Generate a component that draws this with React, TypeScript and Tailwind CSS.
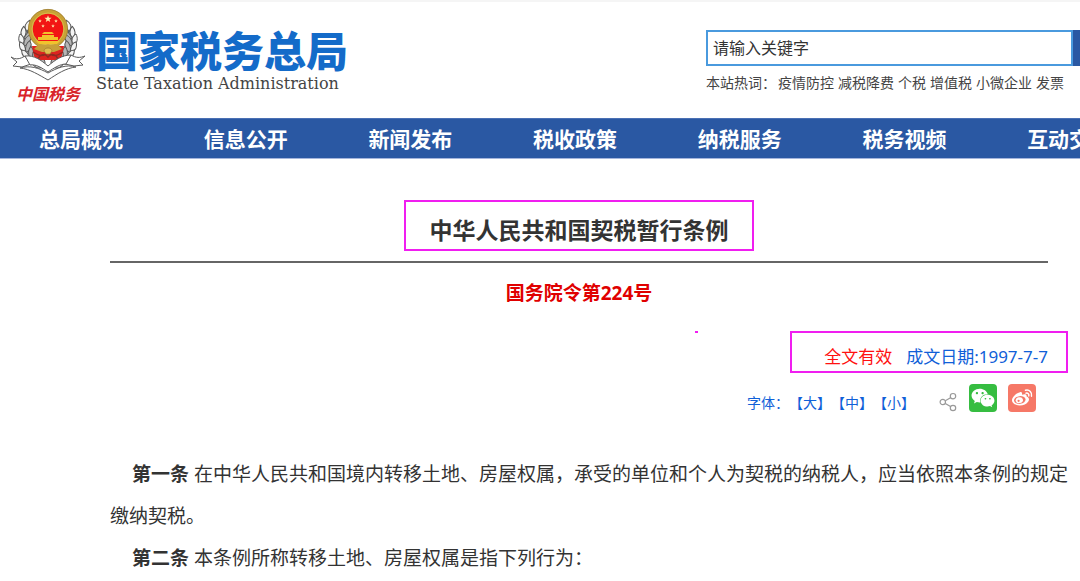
import { FaWeixin } from "react-icons/fa";

const navItems = ["总局概况", "信息公开", "新闻发布", "税收政策", "纳税服务", "税务视频", "互动交流"];

const hotWords = ["疫情防控", "减税降费", "个税", "增值税", "小微企业", "发票"];

const fontSizes = ["大", "中", "小"];

const articles = [
  {
    title: "第一条",
    text: "在中华人民共和国境内转移土地、房屋权属，承受的单位和个人为契税的纳税人，应当依照本条例的规定缴纳契税。",
  },
  { title: "第二条", text: "本条例所称转移土地、房屋权属是指下列行为：" },
];

// x, y and tilt of each leaf on the left half of the wreath
const leaves = [
  [19, 19, 30],
  [15, 25, 15],
  [13, 32, 0],
  [14, 39, -12],
  [17, 46, -28],
  [22, 52, -45],
  [29, 56, -62],
];

function Star({ x, y, r }: { x: number; y: number; r: number }) {
  return (
    <path
      transform={`translate(${x} ${y}) scale(${r})`}
      fill="#fff0b0"
      d="M0-1 .24-.31.95-.31.38.12.59.81 0 .4-.59.81-.38.12-.95-.31-.24-.31Z"
    />
  );
}

function LaurelSide() {
  return (
    <g fill="#f4f4f4" stroke="#555" strokeWidth="1">
      {leaves.map(([x, y, angle]) => (
        <g key={y} transform={`translate(${x} ${y}) rotate(${angle})`}>
          <path d="M0 5C-5 3-5-2-3-6 1-4 2 1 0 5Z" />
          <path d="M1 6C0 0 4-4 7-5 9 0 6 5 1 6Z" fill="#b5b5b5" />
        </g>
      ))}
    </g>
  );
}

function Emblem() {
  return (
    <svg viewBox="0 0 76 74" className="h-[74px] w-[76px]" aria-hidden="true">
      <LaurelSide />
      <g transform="translate(76 0) scale(-1 1)">
        <LaurelSide />
      </g>
      <path d="M22 38h32l-3 14H25Z" fill="#dd2420" />
      <path d="M23 44c6 4 9 5 15 1 6 4 9 3 15-1M28 51c2-5 7-6 10-2 3-4 8-3 10 2" fill="none" stroke="#8f2a22" strokeWidth="1.5" />
      <circle cx="38" cy="21" r="17.5" fill="#f21614" stroke="#c7a236" strokeWidth="4.5" />
      <circle cx="38" cy="21" r="19.6" fill="none" stroke="#9c7b30" strokeWidth="0.8" />
      <circle cx="38" cy="21" r="16" fill="none" stroke="#e0c14e" strokeWidth="0.8" />
      <Star x={38} y={11} r={3.8} />
      <Star x={30} y={13} r={1.9} />
      <Star x={46} y={13} r={1.9} />
      <Star x={33} y={18} r={1.9} />
      <Star x={43} y={18} r={1.9} />
      <path d="M34 24h8l2 2H32ZM32 27h12v2H32ZM28 29h20v3H28ZM26 33h24l-3 3H29Z" fill="#f2c22c" />
      <path d="M28 37h20l4 4-8 3H32l-8-3Z" fill="#c6a03a" />
      <path d="M34 43c0-4 8-4 8 0l-2 3h-4Z" fill="#e0bd50" stroke="#93702a" strokeWidth="0.6" />
      <g fill="#fff" stroke="#5a5a5a" strokeWidth="1" strokeLinejoin="round">
        <path d="M1 49c5 3 9 2 14-1l6 8-9 3-9-1 4-4Z" />
        <path d="M75 48c-5 2-9 2-14-1l-6 9 9 2 9-1-4-4Z" />
        <path d="M15 48c9-1 16 4 23 10 7-6 14-11 23-11l-5 9c-6 0-12 4-18 8-6-4-12-8-18-7Z" />
        <path d="M10 60c10-3 19 0 28 5 9-5 18-9 28-6-10 1-19 7-28 13-9-5-18-11-28-12Z" />
      </g>
    </svg>
  );
}

function Logo() {
  return (
    <a href="#" className="flex pl-[10px] pt-[6px]">
      <span className="flex w-[76px] flex-col items-center">
        <Emblem />
        <span className="text-base font-bold italic leading-6 text-[#d8232a]">中国税务</span>
      </span>
      <span className="ml-[10px] pt-5">
        <span className="block whitespace-nowrap text-[42px] font-black leading-[46px] text-[#146bc9]">
          国家税务总局
        </span>
        <span className="block whitespace-nowrap font-['DejaVu_Serif',serif] text-base leading-5 text-[#444]">
          State Taxation Administration
        </span>
      </span>
    </a>
  );
}

function Search() {
  return (
    <div className="w-[374px] pt-7">
      <form className="flex h-9">
        <input
          type="search"
          aria-label="请输入关键字"
          placeholder="请输入关键字"
          className="min-w-0 flex-1 border-2 border-[#4a9ade] px-[5px] text-base text-[#333] outline-none placeholder:text-[#333]"
        />
        <button type="button" aria-label="搜索" className="w-[7px] bg-[#2a58a3]" />
      </form>
      <p className="mt-[7px] flex gap-1 whitespace-nowrap text-sm text-[#444]">
        <span className="mr-[-2px]">本站热词：</span>
        {hotWords.map((word) => (
          <a key={word} href="#">
            {word}
          </a>
        ))}
      </p>
    </div>
  );
}

function ShareIcon() {
  return (
    <svg viewBox="0 0 18 20" className="h-5 w-[18px]" fill="none" stroke="#999" strokeWidth="1.2" aria-hidden="true">
      <circle cx="3.8" cy="10" r="2.7" />
      <circle cx="14" cy="4.2" r="2.7" />
      <circle cx="14" cy="16" r="2.7" />
      <path d="m6.3 8.7 5.2-3M6.3 11.4l5.2 3.2" />
    </svg>
  );
}

function WeiboIcon() {
  return (
    <svg viewBox="0 0 28 28" className="size-7" aria-hidden="true">
      <path
        fill="#fff"
        d="M12 8.2c1.5-.4 2.4.6 2 2.5 2.600-1 5-.8 4.600 1.900 2.500.8 3 2.900 1.700 4.900-1.600 2.500-5 3.900-8.500 3.900-4.300 0-7.800-2-7.800-5.100C4 12.700 8.500 9 12 8.200Z"
      />
      <ellipse cx="11.8" cy="16" rx="5.8" ry="3.900" fill="#f67867" transform="rotate(-8 11.8 16)" />
      <ellipse cx="11.300" cy="16.200" rx="3.700" ry="2.900" fill="#fff" transform="rotate(-12 11.3 16.2)" />
      <circle cx="10.600" cy="16.800" r="1.100" fill="#f67867" />
      <path
        d="M17.500 6.300c3.800-1 6.900 2 6 5.900M18 9.200c1.900-.4 3.200.9 2.800 2.700"
        fill="none"
        stroke="#fff"
        strokeWidth="1.500"
        strokeLinecap="round"
      />
    </svg>
  );
}

export default function App() {
  return (
    <div
      lang="zh-CN"
      className="overflow-hidden bg-white font-['Noto_Sans','Noto_Sans_CJK_SC',sans-serif] text-[#333]"
    >
      <header className="flex h-[118px] justify-between border-t-2 border-[#f5f5f5]">
        <Logo />
        <Search />
      </header>

      <nav className="flex border-y border-t-[#4a70b4] border-b-[#a5b5dc] bg-[#2a58a3]">
        {navItems.map((item) => (
          <a
            key={item}
            href="#"
            className="w-[15.25%] shrink-0 whitespace-nowrap pl-[39px] pt-px text-[21px] font-bold leading-[38px] text-white"
          >
            {item}
          </a>
        ))}
      </nav>

      <main className="relative ml-[110px] mr-8 pt-[41px]">
        <h1 className="mx-auto w-[350px] border-2 border-[#f01ef0] pb-[3px] pt-3 text-center text-[23px] font-bold leading-8">
          中华人民共和国契税暂行条例
        </h1>
        <hr className="mt-[10px] border-t-2 border-[#666]" />
        <p className="mt-4 text-center text-[19px] font-bold leading-7 text-[#e00000]">国务院令第224号</p>

        <span className="absolute right-[350px] top-[172px] h-[2px] w-[3px] bg-[#f01ef0]" />
        <div className="-mr-5 ml-auto mt-6 flex w-[278px] justify-end gap-[14px] border-2 border-[#f01ef0] pb-[2px] pr-[18px] pt-3 text-[17px] leading-6">
          <span className="text-[#ff1010]">全文有效</span>
          <span className="text-[#1060d8]">成文日期:1997-7-7</span>
        </div>

        <div className="mr-3 mt-[11px] flex items-start justify-end">
          <div className="mr-6 flex pt-[9px] text-sm text-[#1060d8]">
            <span>字体：</span>
            {fontSizes.map((size) => (
              <button key={size} type="button">
                【{size}】
              </button>
            ))}
          </div>
          <button type="button" aria-label="分享" className="mr-3 pt-2">
            <ShareIcon />
          </button>
          <button
            type="button"
            aria-label="微信"
            className="mr-[11px] flex size-7 items-center justify-center rounded-sm bg-[#36bd41] text-white"
          >
            <FaWeixin size={24} />
          </button>
          <button type="button" aria-label="微博" className="size-7 rounded-sm bg-[#f67867]">
            <WeiboIcon />
          </button>
        </div>

        <div className="-mr-6 mt-10 text-[19px] leading-[42px]">
          {articles.map(({ title, text }) => (
            <p key={title} className="indent-[22px]">
              <strong>{title}</strong> {text}
            </p>
          ))}
        </div>
      </main>
    </div>
  );
}
